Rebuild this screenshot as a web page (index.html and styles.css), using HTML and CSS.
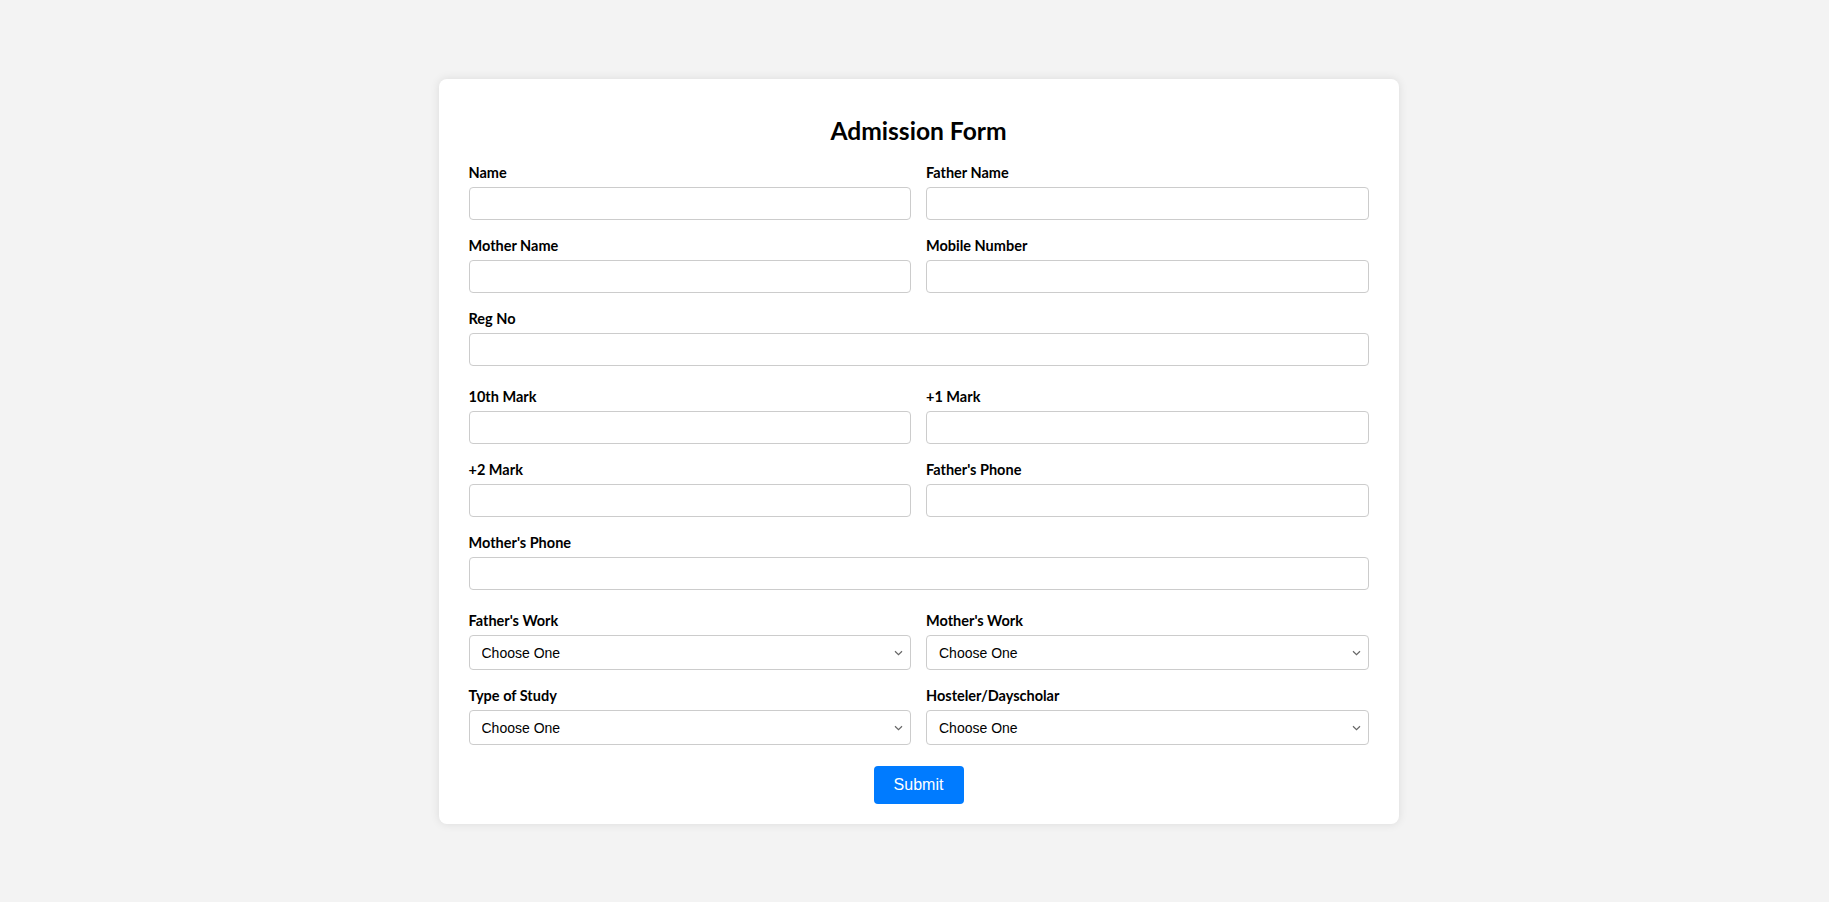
FILE: index.html
```html
<!DOCTYPE html>
<html lang="en">
<head>
<meta charset="utf-8">
<title>Admission Form</title>
<link rel="stylesheet" href="styles.css">
</head>
<body>
<div class="page">
  <form class="card">
    <h2 class="title">Admission Form</h2>
    <div class="grid">
      <div class="field"><label>Name</label><input type="text"></div>
      <div class="field"><label>Father Name</label><input type="text"></div>
      <div class="field"><label>Mother Name</label><input type="text"></div>
      <div class="field"><label>Mobile Number</label><input type="text"></div>
      <div class="field full"><label>Reg No</label><input type="text"></div>
      <div class="field"><label>10th Mark</label><input type="text"></div>
      <div class="field"><label>+1 Mark</label><input type="text"></div>
      <div class="field"><label>+2 Mark</label><input type="text"></div>
      <div class="field"><label>Father's Phone</label><input type="text"></div>
      <div class="field full"><label>Mother's Phone</label><input type="text"></div>
      <div class="field"><label>Father's Work</label><select><option>Choose One</option></select></div>
      <div class="field"><label>Mother's Work</label><select><option>Choose One</option></select></div>
      <div class="field"><label>Type of Study</label><select><option>Choose One</option></select></div>
      <div class="field"><label>Hosteler/Dayscholar</label><select><option>Choose One</option></select></div>
    </div>
    <div class="actions"><button type="button" class="submit">Submit</button></div>
  </form>
</div>
</body>
</html>
```

FILE: styles.css
```css
html, body {
  margin: 0;
  padding: 0;
  background: #f3f3f3;
}
body {
  font-family: "Lato", "Open Sans", sans-serif;
  color: #000;
}
.page {
  display: flex;
  justify-content: center;
  padding: 79px 0 40px 8px;
}
.card {
  width: 960px;
  box-sizing: border-box;
  background: #fff;
  border-radius: 8px;
  box-shadow: 0 0 10px rgba(0, 0, 0, 0.1);
  padding: 38px 30px 20px;
}
.title {
  margin: 0 0 19px;
  font-size: 24.6px;
  line-height: 28px;
  font-weight: 700;
  text-align: center;
}
.grid {
  display: grid;
  grid-template-columns: 1fr 1fr;
  column-gap: 15px;
  row-gap: 17px;
}
.field {
  display: flex;
  flex-direction: column;
}
.field.full {
  grid-column: 1 / -1;
  margin-bottom: 5px;
}
.field label {
  font-size: 14.5px;
  line-height: 17px;
  font-weight: 700;
  margin-bottom: 6px;
}
.field input {
  height: 33px;
  box-sizing: border-box;
  padding: 8px;
  border: 1px solid #ccc;
  border-radius: 4px;
  font-family: Arial, "Liberation Sans", sans-serif;
  font-size: 14px;
  background: #fff;
  margin: 0;
}
.field select {
  -webkit-appearance: none;
  appearance: none;
  height: 35px;
  box-sizing: border-box;
  padding: 8px 24px 8px 12px;
  border: 1px solid #ccc;
  border-radius: 4px;
  font-family: Arial, "Liberation Sans", sans-serif;
  font-size: 14px;
  color: #000;
  margin: 0;
  background-color: #fff;
  background-image: url("data:image/svg+xml;utf8,<svg xmlns='http://www.w3.org/2000/svg' width='9' height='6' viewBox='0 0 9 6'><path d='M1 1.2 L4.5 4.6 L8 1.2' fill='none' stroke='%23666' stroke-width='1.2'/></svg>");
  background-repeat: no-repeat;
  background-position: right 7px center;
  background-size: 9px 6px;
}
.actions {
  display: flex;
  justify-content: center;
  margin-top: 21px;
}
.submit {
  background: #007bff;
  color: #fff;
  border: none;
  border-radius: 4px;
  padding: 10px 20px;
  font-family: Arial, "Liberation Sans", sans-serif;
  font-size: 16px;
  line-height: 18px;
  height: 38px;
  width: 90px;
  cursor: pointer;
}
```
